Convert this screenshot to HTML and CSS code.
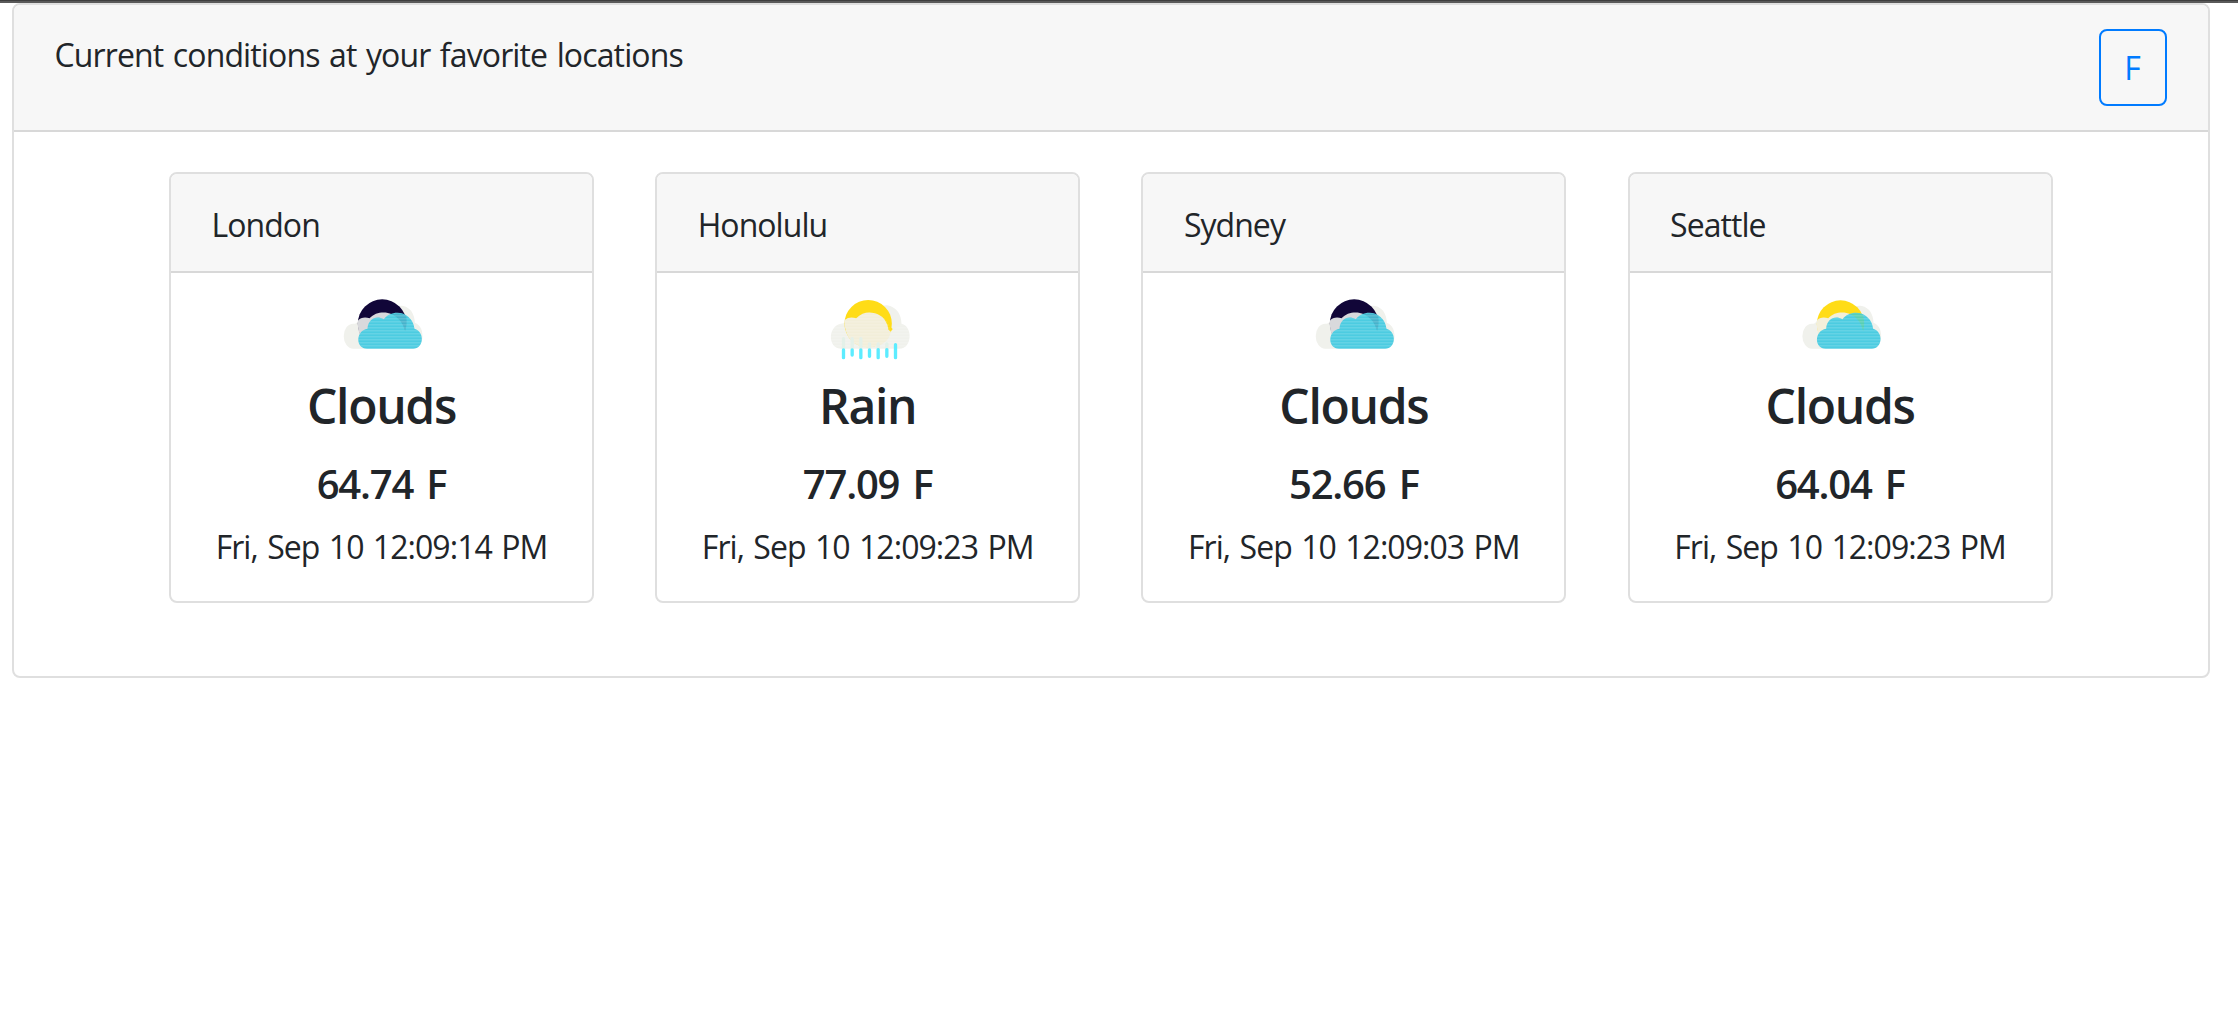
FILE: index.html
```html
<!DOCTYPE html>
<html lang="en">
<head>
<meta charset="utf-8">
<title>Weather</title>
<link rel="stylesheet" href="styles.css">
</head>
<body>
<svg class="defs" aria-hidden="true">
  <defs>
    <pattern id="stripes" width="10" height="9" patternUnits="userSpaceOnUse">
      <rect width="10" height="3" fill="#fff" opacity=".2"/>
    </pattern>
    <path id="back" d="M68 190A28 37 0 0 1 68 115C76 115 79 114 83 106C90 96 105 94 117 99C130 80 160 76 178 88C180 70 200 57 218 62C241 67 252 87 253 112C266 118 276 128 276 153C276 177 262 190 242 190Z"/>
    <path id="front" d="M110 190C75 190 74 136 111 130C112 102 137 88 160 102C176 78 214 76 233 94C246 105 250 117 252 130C284 139 280 190 248 190Z"/>
  </defs>
</svg>
<main class="panel">
  <header class="panel-header">
    <span class="panel-title">Current conditions at your favorite locations</span>
    <button class="unit">F</button>
  </header>
  <div class="cards">
    <section class="card">
      <div class="card-header"><span class="city">London</span></div>
      <div class="card-body">
        <svg class="icon" viewBox="-10.5 -1 330 255">
          <use href="#back" class="haze"/>
          <circle cx="155" cy="115" r="73" fill="#110638"/>
          <path d="M82 120V106C90 96 105 94 117 99C135 79 165 78 184 87Q222 105 224 137Q220 185 155 188Q84 180 82 120Z" fill="#d9d9dc"/>
          <use href="#front" class="cloud"/><path d="M184 87C207 79 224 86 227 92Q231 115 224 137Q214 101 184 87Z" fill="#45b3cc"/>
          <use href="#front" fill="url(#stripes)"/>
        </svg>
        <h2 class="condition">Clouds</h2>
        <h3 class="temp">64.74 F</h3>
        <p class="date">Fri, Sep 10 12:09:14 PM</p>
      </div>
    </section>
    <section class="card">
      <div class="card-header"><span class="city">Honolulu</span></div>
      <div class="card-body">
        <svg class="icon" viewBox="-7.5 -1 330 255">
          <path class="haze" d="M75 190C36 190 34 116 85 114C91 95 110 94 122 99C142 78 167 78 187 87C177 64 209 55 224 62C246 70 257 89 258 115C293 123 290 190 252 190Z"/>
          <circle cx="158" cy="115" r="71" fill="#ffdc17"/>
          <path d="M87 112V104C99 94 112 95 122 99C142 78 167 78 187 87Q214 99 219 134L228 132Q221 184 158 187Q91 181 87 112Z" fill="#f2eed9"/>
          <path d="M223 137Q225 134 229 129" stroke="#ffdc17" stroke-width="7"/>
          <path d="M75 190C36 190 34 116 85 114C91 95 110 94 122 99C142 78 167 78 187 87Q224 105 224 137L260 117C293 123 290 190 252 190Z" fill="url(#stripes)"/>
          <path d="M84 160V191M110 160V191M136 160V191M162 176V191M188 176V191M214 176V191" class="rain faint"/>
          <path d="M84 194V217M110 194V209M136 194V217M162 194V213M188 193V217M214 193V213M240 178V217" class="rain"/>
        </svg>
        <h2 class="condition">Rain</h2>
        <h3 class="temp">77.09 F</h3>
        <p class="date">Fri, Sep 10 12:09:23 PM</p>
      </div>
    </section>
    <section class="card">
      <div class="card-header"><span class="city">Sydney</span></div>
      <div class="card-body">
        <svg class="icon" viewBox="-10.5 -1 330 255">
          <use href="#back" class="haze"/>
          <circle cx="155" cy="115" r="73" fill="#110638"/>
          <path d="M82 120V106C90 96 105 94 117 99C135 79 165 78 184 87Q222 105 224 137Q220 185 155 188Q84 180 82 120Z" fill="#d9d9dc"/>
          <use href="#front" class="cloud"/><path d="M184 87C207 79 224 86 227 92Q231 115 224 137Q214 101 184 87Z" fill="#45b3cc"/>
          <use href="#front" fill="url(#stripes)"/>
        </svg>
        <h2 class="condition">Clouds</h2>
        <h3 class="temp">52.66 F</h3>
        <p class="date">Fri, Sep 10 12:09:03 PM</p>
      </div>
    </section>
    <section class="card">
      <div class="card-header"><span class="city">Seattle</span></div>
      <div class="card-body">
        <svg class="icon" viewBox="-12.5 -1 330 255">
          <use href="#back" class="haze"/>
          <circle cx="154" cy="116" r="71" fill="#ffdc17"/>
          <path d="M83 120V106C90 96 105 94 117 99C135 79 165 78 184 87Q222 105 224 137Q220 185 155 188Q84 180 83 120Z" fill="#f3efda"/>
          <use href="#front" class="cloud"/><path d="M184 87C207 79 220 86 222 92Q228 115 222 137Q214 101 184 87Z" fill="#57cfb4"/>
          <use href="#front" fill="url(#stripes)"/>
        </svg>
        <h2 class="condition">Clouds</h2>
        <h3 class="temp">64.04 F</h3>
        <p class="date">Fri, Sep 10 12:09:23 PM</p>
      </div>
    </section>
  </div>
</main>
</body>
</html>
```
FILE: styles.css
```css
* { box-sizing: border-box; }
html { border-top: 1px solid #3e3e3e; background: #fff; }
body {
  margin: 0;
  border-top: 2px solid #5a5a5a;
  color: #212529;
  font: 400 32px/48px "Open Sans", "Noto Sans", sans-serif;
}
.defs { display: block; width: 0; height: 0; }
.panel {
  width: 2198px;
  height: 675px;
  margin-left: 12px;
  border: 2px solid #dfdfdf;
  border-radius: 8px;
}
.panel-header {
  display: flex;
  justify-content: space-between;
  height: 127px;
  padding: 24px 41px 0 40px;
  border-bottom: 2px solid #d8d8d8;
  border-radius: 6px 6px 0 0;
  background: #f7f7f7;
}
.panel-title {
  padding: 2px 0 0 0.5px;
  letter-spacing: -0.87px;
  word-spacing: 2px;
}
.unit {
  width: 68px;
  height: 77px;
  padding: 0 1px 0 0;
  border: 2px solid #007bff;
  border-radius: 8px;
  background: transparent;
  color: #007bff;
  font: inherit;
}
.cards {
  display: flex;
  gap: 61.2px;
  padding: 40px 0 0 155px;
}
.card {
  width: 425px;
  height: 431px;
  border: 2px solid #dfdfdf;
  border-radius: 8px;
}
.card-header {
  height: 99px;
  padding: 27px 40.5px 0;
  border-bottom: 2px solid #d8d8d8;
  border-radius: 6px 6px 0 0;
  background: #f7f7f7;
}
.city { letter-spacing: -0.95px; }
.card-body {
  display: flex;
  flex-direction: column;
  align-items: center;
  padding-top: 12px;
}
.icon { width: 110px; height: 85px; }
.haze { fill: #f0f1ec; }
.cloud { fill: #4ccce1; }
.rain { fill: none; stroke: #5cecff; stroke-width: 10; stroke-linecap: round; }
.faint { stroke: #e4f0e8; }
.condition {
  margin: 7px 0 0;
  font-size: 48px;
  font-weight: 600;
  line-height: 58px;
  letter-spacing: -1.3px;
}
.temp {
  margin: 25px 0 0;
  font-size: 40px;
  font-weight: 600;
  line-height: 48px;
  letter-spacing: -1.2px;
  word-spacing: 4px;
}
.date {
  margin: 15px 0 0;
  white-space: nowrap;
  letter-spacing: -0.95px;
  word-spacing: 2px;
}
```
